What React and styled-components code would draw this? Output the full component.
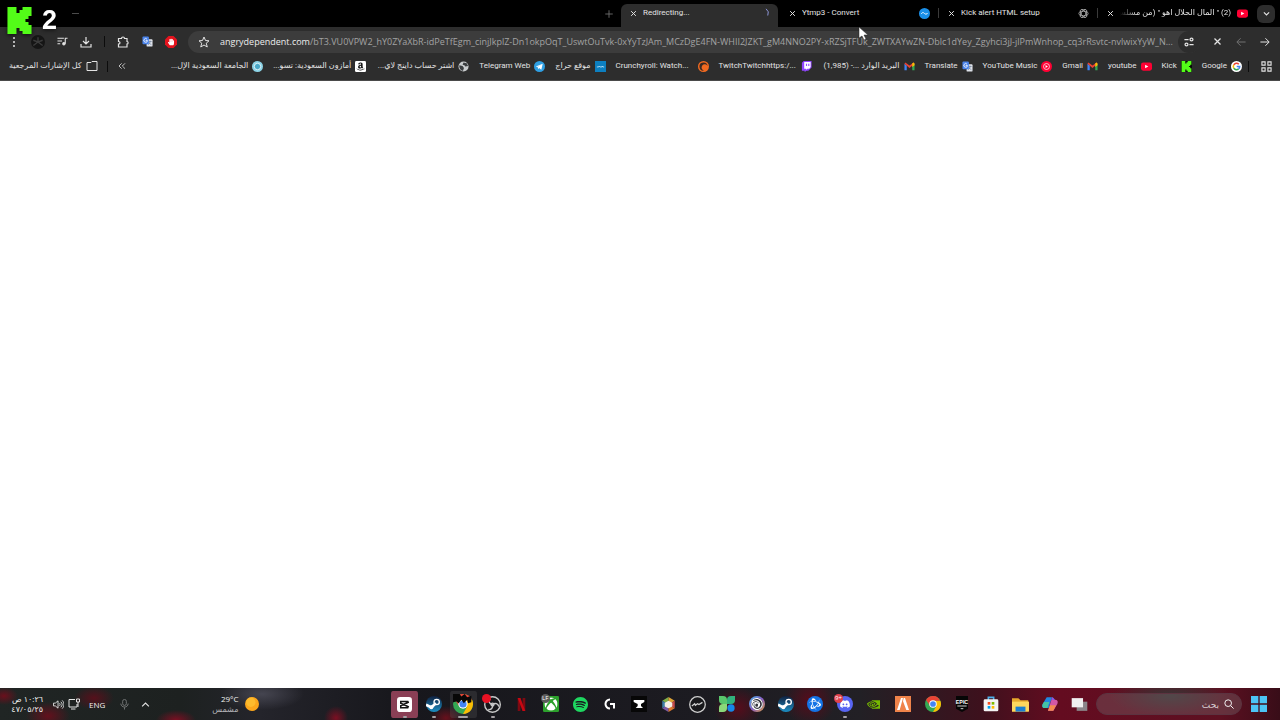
import React from 'react';
import styled, { createGlobalStyle, css } from 'styled-components';
import { SiSpotify, SiNvidia, SiUbisoft, SiBattledotnet } from 'react-icons/si';
import { FaXbox, FaDiscord, FaAmazon, FaHandPaper } from 'react-icons/fa';

const GlobalStyle = createGlobalStyle`
  * { box-sizing: border-box; }
  body {
    margin: 0;
    background: #fff;
    font-family: "Open Sans", "Noto Sans", "DejaVu Sans", sans-serif;
  }
  button, input { font-family: inherit; }
`;

const Browser = styled.div`
  position: relative;
  display: flex;
  flex-direction: column;
  min-height: 100vh;
`;

const IconButton = styled.button`
  flex: none;
  display: flex;
  align-items: center;
  justify-content: center;
  width: ${(p) => p.$size || 24}px;
  height: ${(p) => p.$size || 24}px;
  padding: 0;
  border: none;
  border-radius: 50%;
  background: ${(p) => p.$bg || 'transparent'};
  color: ${(p) => p.$color || '#e3e3e3'};
`;

const TabStrip = styled.header`
  display: flex;
  align-items: flex-end;
  justify-content: flex-end;
  height: 27px;
  padding-right: 5px;
  background: #000;
`;

const NewTab = styled(IconButton)`
  height: 26px;
`;

const Tab = styled.div`
  position: relative;
  display: flex;
  align-items: center;
  gap: 6px;
  width: 159px;
  height: 23px;
  padding: 0 9px 5px 8px;
  color: #e3e3e3;
  font-family: Roboto, "DejaVu Sans", sans-serif;
  font-size: 8px;
  border-radius: 6px 6px 0 0;
  ${(p) => p.$active && css`
    background: #2d2d2d;
    width: 157px;
    margin-right: 2px;
  `}
  ${(p) => p.$divider && css`
    &::after {
      content: '';
      position: absolute;
      right: 0;
      top: 4px;
      height: 10px;
      width: 1px;
      background: #3a3a3a;
    }
  `}
`;

const TabTitle = styled.span`
  flex: 1;
  overflow: hidden;
  white-space: nowrap;
  text-align: start;
  line-height: 16px;
  ${(p) => p.dir === 'rtl' && css`
    mask-image: linear-gradient(to left, #000 85%, transparent);
  `}
`;

const TabSearch = styled(IconButton)`
  border-radius: 6px;
  align-self: center;
`;

const Toolbar = styled.div`
  display: flex;
  align-items: center;
  height: 29px;
  padding: 0 3px 0 2px;
  background: #2d2d2d;
`;

const Divider = styled.span`
  flex: none;
  width: 1px;
  height: 11px;
  margin: 0 ${(p) => p.$gap || 6}px;
  background: #0c0c0c;
`;

const AddressBar = styled.div`
  flex: 1;
  min-width: 0;
  display: flex;
  align-items: center;
  height: 22px;
  margin: 0 5px;
  padding-left: 5px;
  border-radius: 11px;
  background: #3c3c3c;
`;

const Url = styled.span`
  flex: 1;
  min-width: 0;
  margin: 0 3px 0 5px;
  overflow: hidden;
  white-space: nowrap;
  font-size: 9px;
  line-height: 16px;
  color: #a3a3a3;
  b { font-weight: 400; color: #ededed; }
`;

const Bookmarks = styled.nav`
  display: flex;
  align-items: center;
  height: 25px;
  padding: 0 3px 4px 9px;
  background: #2d2d2d;
  border-bottom: 1px solid #4a4a4a;
`;

const BookmarkList = styled.div`
  display: flex;
  gap: 10px;
  margin-left: auto;
`;

const Bookmark = styled.a`
  display: flex;
  align-items: center;
  gap: 4px;
  color: #e3e3e3;
  font-family: Roboto, "DejaVu Sans", sans-serif;
  font-size: 8px;
  line-height: 16px;
  text-decoration: none;
  white-space: nowrap;
  svg { flex: none; }
  span { width: ${(p) => (p.$long ? '78px' : 'auto')}; }
`;

const Page = styled.main`
  flex: 1;
  background: #fff;
`;

const TaskbarRoot = styled.footer`
  display: flex;
  align-items: center;
  height: 32px;
  padding: 0 12px;
  color: #f2f2f2;
  background:
    radial-gradient(ellipse 14px 9px at 4px 8px, #6b0f1c, transparent),
    radial-gradient(ellipse 22px 14px at 48px 28px, #63101c, transparent),
    radial-gradient(ellipse 20px 12px at 94px 10px, #56101b, transparent),
    radial-gradient(ellipse 20px 10px at 176px 32px, #7c0f22, transparent),
    radial-gradient(ellipse 42px 16px at 262px 6px, #454550, transparent),
    radial-gradient(ellipse 12px 12px at 336px 30px, #7c0f22, transparent),
    radial-gradient(ellipse 16px 12px at 446px 30px, #68101c, transparent),
    radial-gradient(ellipse 24px 22px at 738px 20px, #560c1b, transparent),
    radial-gradient(ellipse 26px 26px at 810px 12px, #560c1b, transparent),
    radial-gradient(ellipse 60px 20px at 1170px 8px, #383636, transparent),
    linear-gradient(90deg, #202524 0, #1d2120 180px, #24242b 260px, #17171c 400px, #1c1b21 700px, #222025 860px, #3d111d 980px, #640c20 1060px, #5d1021 1220px, #380d18 100%);
`;

const Tray = styled.div`
  display: flex;
  align-items: center;
  gap: 7px;
  font-size: 8px;
`;

const TrayGroup = styled.div`
  display: flex;
  align-items: center;
`;

const Clock = styled.time`
  width: 31px;
  line-height: 10px;
  text-align: right;
  white-space: nowrap;
`;

const Weather = styled.div`
  display: flex;
  align-items: center;
  gap: 6px;
  margin-left: 58px;
  font-size: 8px;
  line-height: 10px;
  text-align: right;
`;

const WeatherText = styled.div`
  small { display: block; font-size: 8px; color: #b5b5b8; }
`;

const Dock = styled.div`
  display: flex;
  width: 704px;
  margin-left: auto;
`;

const DockApp = styled.button`
  position: relative;
  flex: 1;
  display: flex;
  align-items: center;
  justify-content: center;
  height: 27px;
  padding: 0 1px;
  border: none;
  border-radius: 3px;
  background: ${(p) => p.$bg || 'transparent'};
  background-clip: content-box;
  color: #fff;
  ${(p) => p.$running && css`
    &::after {
      content: '';
      position: absolute;
      bottom: 0;
      width: ${p.$running}px;
      height: 2px;
      border-radius: 1px;
      background: #a5a0a4;
    }
  `}
`;

const Badge = styled.span`
  position: absolute;
  top: 3px;
  left: 4px;
  width: 9px;
  height: 9px;
  border-radius: 50%;
  background: ${(p) => p.$bg};
  font-size: 6px;
  line-height: 9px;
  text-align: center;
`;

const Search = styled.label`
  display: flex;
  align-items: center;
  width: 146px;
  height: 22px;
  margin: 0 8px 0 2px;
  padding: 0 7px;
  gap: 5px;
  border: 1px solid #5c3340;
  border-radius: 11px;
  background: rgba(120, 100, 105, 0.4);
  input {
    flex: 1;
    min-width: 0;
    padding: 0;
    border: none;
    outline: none;
    background: transparent;
    color: #ddd;
    font-size: 9px;
  }
  input::placeholder { color: #d6ccd0; opacity: 1; }
`;

const Overlay = styled.div`
  position: absolute;
  top: 4px;
  left: 6px;
  display: flex;
  align-items: center;
  gap: 9px;
  color: #fff;
  font: bold 27px/32px "Liberation Sans", Arial, sans-serif;
  filter: drop-shadow(0 1px 2px rgba(0, 0, 0, 0.7));
`;

const DragMark = styled.span`
  width: 7px;
  height: 1px;
  margin: 0 auto 13px 72px;
  background: #4b4b4b;
`;

const Pointer = styled.svg`
  position: absolute;
  top: 26px;
  left: 858px;
`;

const Svg = ({ s = 11, vb = 24, children, ...rest }) => (
  <svg width={s} height={s} viewBox={`0 0 ${vb} ${vb}`} fill="none" stroke="currentColor" strokeWidth="2.4" aria-hidden="true" {...rest}>
    {children}
  </svg>
);

const CloseIcon = ({ s = 8 }) => <Svg s={s} strokeWidth="3.4"><path d="M4 4l16 16M20 4L4 20" /></Svg>;
const KickIcon = ({ s = 11, boxed }) => (
  <Svg s={s} stroke="none">
    {boxed && <rect width="24" height="24" fill="#0b0b0b" />}
    <path fill="#53fc18" d="M1.3 0h8v5.3H12V2.7h2.700V0h8v8H20v2.700h-2.700v2.600H20V16h2.700v8h-8v-2.700H12v-2.600H9.300V24h-8z" />
  </Svg>
);
const YoutubeIcon = () => (
  <Svg stroke="none"><rect y="3" width="24" height="18" rx="5" fill="#ff0033" /><path fill="#fff" d="M9 8l7 4-7 4z" /></Svg>
);
const GmailIcon = () => (
  <Svg stroke="none">
    <path fill="#4285f4" d="M1 6v14h5V10z" /><path fill="#34a853" d="M18 10v10h5V6z" />
    <path fill="#ea4335" d="M3 3l9 7 9-7 2 3-11 9L1 6z" /><path fill="#fbbc04" d="M18 5l3-2 2 3v3l-5 4z" />
  </Svg>
);
const TranslateIcon = () => (
  <Svg stroke="none">
    <rect x="10" y="7" width="13" height="16" rx="2" fill="#dfe3ea" />
    <path d="M14 12h7M17.5 10v2c0 4-2 6-4 7m2-5c1 3 3 4 5 5" stroke="#6b7c98" strokeWidth="1.5" />
    <rect x="1" y="1" width="14" height="17" rx="2" fill="#4a83ea" />
    <path d="M11 7a4 4 0 1 0 1 3H8" stroke="#fff" strokeWidth="1.8" />
  </Svg>
);
const GoogleIcon = () => (
  <Svg stroke="none">
    <circle cx="12" cy="12" r="12" fill="#fff" />
    <g fill="none" strokeWidth="3.4">
      <path stroke="#ea4335" d="M6 8.5A7 7 0 0 1 17 7" /><path stroke="#fbbc04" d="M6 8.5a7 7 0 0 0 0 7" />
      <path stroke="#34a853" d="M6 15.5A7 7 0 0 0 16.5 17.3" /><path stroke="#4285f4" d="M12.5 12H19a7 7 0 0 1-2.5 5.3" />
    </g>
  </Svg>
);
const GlobeIcon = () => (
  <Svg stroke="none"><circle cx="12" cy="12" r="11" fill="#c9ccce" /><path fill="#3b3e40" d="M3 9l7 2 3 4-2 6c-5 0-9-6-8-12zM12 3l7 2 3 6-6 1-2-3-4-1z" /></Svg>
);
const ChromeIcon = ({ s = 17 }) => (
  <Svg s={s} stroke="none">
    <circle cx="12" cy="12" r="12" fill="#34a853" />
    <path fill="#fbbc04" d="M12 12V7h10.9A12 12 0 0 1 12 24l4.5-8z" />
    <path fill="#ea4335" d="M12 12l-5 2L1.6 6A12 12 0 0 1 22.8 7H12z" />
    <circle cx="12" cy="12" r="5.6" fill="#fff" /><circle cx="12" cy="12" r="4.3" fill="#4285f4" />
  </Svg>
);
const TelegramIcon = () => (
  <Svg stroke="none"><circle cx="12" cy="12" r="12" fill="#2f9fe3" /><path fill="#fff" d="M4 12l15-6-3 13-5-4-2 3-1-5 8-5-9 5z" /></Svg>
);
const KingIcon = () => (
  <Svg stroke="none"><circle cx="12" cy="12" r="12" fill="#8bd3e6" /><circle cx="12" cy="12" r="7" fill="#4ba9c8" stroke="#e8f7fb" strokeWidth="2" /></Svg>
);
const AmazonIcon = () => (
  <Svg stroke="none"><rect width="24" height="24" rx="3" fill="#fff" /><FaAmazon x="2" y="2" size={20} color="#111" /></Svg>
);
const HarajIcon = () => (
  <Svg stroke="none"><rect width="24" height="24" fill="#0d7fc0" /><path d="M4 13h4l1-2 2 2h4l1-2 1 2h3" stroke="#cfe8f6" strokeWidth="1.8" /></Svg>
);
const CrunchyIcon = () => (
  <Svg stroke="none"><circle cx="12" cy="12" r="12" fill="#f26a21" /><path fill="#3b2a22" d="M21 11a9 9 0 1 0-8 10 7 7 0 1 1 8-10z" /><circle cx="15" cy="13" r="4" fill="#f26a21" /></Svg>
);
const TwitchIcon = () => (
  <Svg stroke="none"><path fill="#9146ff" d="M2 4l4-4h17v14l-7 7h-4l-4 3v-3H2z" /><path fill="#fff" d="M7 2h14v11l-3 4h-4l-3 2v-2H7z" /><path d="M12 6v5M17 6v5" stroke="#9146ff" /></Svg>
);
const MusicIcon = () => (
  <Svg stroke="none"><circle cx="12" cy="12" r="12" fill="#ff0033" /><circle cx="12" cy="12" r="6.5" stroke="#fff" strokeWidth="1.5" /><path fill="#fff" d="M10 8.5l5 3.5-5 3.5z" /></Svg>
);

const tabs = [
  { title: 'Redirecting...', active: true, icon: <Svg s={10} stroke="#8e97d8"><path d="M17 2a13 13 0 0 1 4 16" /></Svg> },
  { title: 'Ytmp3 - Convert', divider: true, icon: <Svg stroke="none"><circle cx="12" cy="12" r="12" fill="#1a8fe8" /><path d="M5 13c3-5 5-3 7-1s5 2 7-1" stroke="#fff" strokeWidth="2" /></Svg> },
  {
    title: 'Kick alert HTML setup', divider: true,
    icon: <Svg stroke="#b5b5b5" strokeWidth="1.8">{[0, 60, 120].map((a) => <ellipse key={a} cx="12" cy="12" rx="10" ry="5" transform={`rotate(${a} 12 12)`} />)}</Svg>,
  },
  { title: '(2) " المال الحلال اهو " (من مسلس', dir: 'rtl', icon: <YoutubeIcon /> },
];

const bookmarks = [
  { label: 'الجامعة السعودية الإل...', rtl: true, long: true, icon: <KingIcon /> },
  { label: 'أمازون السعودية: تسو...', rtl: true, long: true, icon: <AmazonIcon /> },
  { label: 'اشتر حساب داينج لاي...', rtl: true, long: true, icon: <GlobeIcon /> },
  { label: 'Telegram Web', icon: <TelegramIcon /> },
  { label: 'موقع حراج', rtl: true, icon: <HarajIcon /> },
  { label: 'Crunchyroll: Watch...', long: true, icon: <CrunchyIcon /> },
  { label: 'TwitchTwitchhttps:/...', long: true, icon: <TwitchIcon /> },
  { label: 'البريد الوارد ...- (1,985)', rtl: true, long: true, icon: <GmailIcon /> },
  { label: 'Translate', icon: <TranslateIcon /> },
  { label: 'YouTube Music', icon: <MusicIcon /> },
  { label: 'Gmail', icon: <GmailIcon /> },
  { label: 'youtube', icon: <YoutubeIcon /> },
  { label: 'Kick', icon: <KickIcon boxed /> },
  { label: 'Google', icon: <GoogleIcon /> },
];

const SteamIcon = () => (
  <Svg s={16} stroke="none">
    <defs><linearGradient id="steam" x2="0" y2="1"><stop stopColor="#10203f" /><stop offset="1" stopColor="#1c8fc4" /></linearGradient></defs>
    <circle cx="12" cy="12" r="12" fill="url(#steam)" />
    <path d="M0 13l8 4 7-6" stroke="#fff" strokeWidth="4" /><circle cx="16" cy="9" r="4" stroke="#fff" strokeWidth="2" /><circle cx="8" cy="17" r="3" fill="#fff" />
  </Svg>
);

const apps = [
  { name: 'CapCut', bg: '#8a3f55', running: 4, icon: <Svg s={15} stroke="none"><rect width="24" height="24" rx="5" fill="#fff" /><path d="M17 9V7H6v3l13 6M17 15v2H6v-3l13-6" stroke="#111" strokeWidth="2.4" /></Svg> },
  { name: 'Steam', running: 4, icon: <SteamIcon /> },
  { name: 'Chrome', bg: 'rgba(120,120,120,0.2)', running: 10, icon: <Svg s={20}><ChromeIcon s={24} /><path fill="#080808" stroke="none" d="M0 0h8l2 3 4-3 3 4 5-2v8l-4 1-1-4-4 4-3-4-3 4-3-2-4 1z" /></Svg> },
  { name: 'OBS', running: 4, badge: ' ', badgeBg: '#e81123', icon: <Svg s={17} strokeWidth="2" stroke="#c8c8c8"><circle cx="12" cy="12" r="11" fill="#17171a" /><path d="M12 12c-5-1-6-5-3-8M12 12c4-3 8-1 9 3M12 12c1 5-2 8-6 7" /><circle cx="12" cy="12" r="2" /></Svg> },
  { name: 'Netflix', icon: <Svg s={13} stroke="none"><path fill="#7d0a12" d="M5 0h5v24H5zM14 0h5v24h-5z" /><path fill="#c80812" d="M5 0h5l9 24h-5z" /></Svg> },
  { name: 'Xbox', badge: 'LF', badgeBg: '#5b5b5b', icon: <Svg s={16} stroke="none"><rect width="24" height="24" rx="2" fill="#2ca02c" /><FaXbox x="2" y="2" size={20} color="#fff" /></Svg> },
  { name: 'Spotify', icon: <SiSpotify size={15} color="#1ed760" /> },
  { name: 'Logitech G', icon: <Svg s={12} strokeWidth="4"><path d="M12 3a9 9 0 1 0 0 18M12 12h8v9" /></Svg> },
  { name: 'Anvil', icon: <Svg s={16} stroke="none"><rect width="24" height="24" fill="#070707" /><path fill="#fff" d="M4 6h16v3l-5 3v3l3 3H7l3-3v-3L4 9z" /></Svg> },
  { name: 'Hexagon', icon: <Svg s={15} stroke="none"><path fill="#7fae49" d="M12 0L2 6l10 6z" /><path fill="#e0a437" d="M12 0l10 6-10 6z" /><path fill="#3f7fa8" d="M2 6v12l10-6z" /><path fill="#c34a4a" d="M22 6v12l-10-6z" /><path fill="#7e5aa4" d="M2 18l10 6V12z" /><path fill="#d8762f" d="M22 18l-10 6V12z" /><path fill="#f5efe4" d="M12 6l6 3v6l-6 3-6-3V9z" /></Svg> },
  { name: 'ZOWIE', icon: <Svg s={17} strokeWidth="1.8" stroke="#d0d0d0"><circle cx="12" cy="12" r="11" fill="#18181b" /><path d="M4 14l4-3 1 2 3-2 2 1 5-3" /></Svg> },
  { name: 'Clover', icon: <Svg s={16} stroke="none"><path fill="#59c66c" d="M0 0h6a6 6 0 0 1 6 6v6H6a6 6 0 0 1-6-6z" /><path fill="#31b17c" d="M24 0v6a6 6 0 0 1-6 6h-6V6a6 6 0 0 1 6-6z" /><path fill="#8bd879" d="M0 24v-6a6 6 0 0 1 6-6h6v6a6 6 0 0 1-6 6z" /><circle cx="18" cy="18" r="5.5" fill="#1687e8" /></Svg> },
  { name: 'Ubisoft', icon: <Svg s={16} stroke="none"><defs><linearGradient id="ubi" x2="1" y2="1"><stop stopColor="#3db7e8" /><stop offset=".5" stopColor="#8b5fc7" /><stop offset="1" stopColor="#e0a33c" /></linearGradient></defs><circle cx="12" cy="12" r="12" fill="url(#ubi)" /><circle cx="12" cy="12" r="9" fill="#33343c" /><SiUbisoft x="3" y="3" size={18} color="#fff" /></Svg> },
  { name: 'Steam', icon: <SteamIcon /> },
  { name: 'Battle.net', icon: <Svg s={16} stroke="none"><circle cx="12" cy="12" r="12" fill="#1473e6" /><SiBattledotnet x="3" y="3" size={18} color="#fff" /></Svg> },
  { name: 'Discord', running: 4, badge: '9+', badgeBg: '#e0414c', icon: <Svg s={16} stroke="none"><circle cx="12" cy="12" r="12" fill="#5865f2" /><FaDiscord x="4" y="4" size={16} color="#fff" /></Svg> },
  { name: 'NVIDIA', icon: <SiNvidia size={13} color="#76b900" /> },
  { name: 'FiveM', icon: <Svg s={16} stroke="none"><rect width="24" height="24" fill="#f0834a" /><path fill="#fff" d="M9 3h3l-5 18H3zM13 3h2l6 18h-4l-5-13z" /></Svg> },
  { name: 'Chrome', icon: <ChromeIcon s={16} /> },
  { name: 'Epic Games', icon: <Svg s={16} stroke="none"><path fill="#060606" d="M3 0h18v19l-9 5-9-5z" /><text x="12" y="12" textAnchor="middle" fill="#fff" fontFamily="Liberation Sans, sans-serif" fontWeight="700" fontSize="8">EPIC</text><path d="M5 15h14M10 19h4" stroke="#ccc" strokeWidth="1.5" /></Svg> },
  { name: 'Microsoft Store', icon: <Svg s={16} stroke="none"><path d="M8 6V2h8v4" stroke="#4eb0ea" /><rect x="1" y="5" width="22" height="18" rx="2" fill="#f4f4f4" /><path fill="#f25022" d="M7 9h4v4H7z" /><path fill="#7fba00" d="M13 9h4v4h-4z" /><path fill="#00a4ef" d="M7 15h4v4H7z" /><path fill="#ffb900" d="M13 15h4v4h-4z" /></Svg> },
  { name: 'Files', icon: <Svg s={17} stroke="none"><path fill="#e8a92d" d="M0 3h9l3 3h11v16H0z" /><path fill="#ffd75e" d="M0 8h24v14H0z" /><path fill="#1c7fd0" d="M5 15h14v7H5z" /></Svg> },
  { name: 'Copilot', icon: <Svg s={16} stroke="none"><path fill="#2088e0" d="M7 2h8l-5 16H4c-4 0-4-3-3-6z" /><path fill="#45c2a4" d="M3 9h8l-3 9H4c-4 0-4-3-3-6z" /><path fill="#d357a8" d="M17 22H9l5-16h6c4 0 4 3 3 6z" /><path fill="#f58b50" d="M17 22H9l3-8h9z" /><path fill="#8a5be0" d="M15 2c3 0 3 4 6 4h-7l-2 5z" /></Svg> },
  { name: 'Task view', icon: <Svg s={17} stroke="none"><path fill="#8b8589" d="M8 8h15v13H8z" /><path fill="#f0f0f0" d="M1 3h16v13H1z" /></Svg> },
];

function TabBar() {
  return (
    <TabStrip>
      <DragMark />
      <NewTab $color="#777" aria-label="New tab"><Svg s={10} strokeWidth="2"><path d="M12 3v18M3 12h18" /></Svg></NewTab>
      {tabs.map((t) => (
        <Tab key={t.title} $active={t.active} $divider={t.divider}>
          <IconButton $size={8} aria-label="Close tab"><CloseIcon s={7} /></IconButton>
          <TabTitle dir={t.dir}>{t.title}</TabTitle>
          {t.icon}
        </Tab>
      ))}
      <TabSearch $size={18} $bg="#2d2d2d" aria-label="Search tabs"><Svg s={9} strokeWidth="3"><path d="M5 9l7 7 7-7" /></Svg></TabSearch>
    </TabStrip>
  );
}

function NavBar() {
  return (
    <Toolbar>
      <IconButton aria-label="Menu"><Svg s={12} fill="currentColor" stroke="none"><circle cx="12" cy="4" r="2" /><circle cx="12" cy="12" r="2" /><circle cx="12" cy="20" r="2" /></Svg></IconButton>
      <IconButton aria-label="Profile"><Svg s={14} stroke="none"><circle cx="12" cy="12" r="12" fill="#151515" /><path d="M12 4v8l-8 6m8-6l8 6M4 9l8 3 8-3" stroke="#3b3b3b" /></Svg></IconButton>
      <IconButton aria-label="Media"><Svg><path d="M1 5h14M1 11h10M1 17h6M23 5h-5v12" /><circle cx="15" cy="17" r="2.5" fill="currentColor" /></Svg></IconButton>
      <IconButton aria-label="Downloads"><Svg s={12}><path d="M12 2v13M6 10l6 6 6-6M2 16v6h20v-6" /></Svg></IconButton>
      <Divider />
      <IconButton aria-label="Extensions"><Svg s={12}><path d="M3 5h6c0-4 6-4 6 0h5v6c3 0 3 5 0 5v6H3v-6c4 0 4-5 0-5z" /></Svg></IconButton>
      <IconButton aria-label="Translate"><TranslateIcon /></IconButton>
      <IconButton aria-label="Ad blocker"><Svg s={12} stroke="none"><path fill="#e3141e" d="M7 0h10l7 7v10l-7 7H7l-7-7V7z" /><FaHandPaper x="5" y="5" size={14} color="#fff" /></Svg></IconButton>
      <AddressBar>
        <IconButton $size={22} aria-label="Bookmark this page"><Svg s={12} strokeWidth="2"><path d="M12 2l3 7 7 .6-5.5 4.8L18.5 22 12 18l-6.5 4 2-7.6L2 9.6 9 9z" /></Svg></IconButton>
        <Url><b>angrydependent.com</b>/bT3.VU0VPW2_hY0ZYaXbR-idPeTfEgm_cinjJkplZ-Dn1okpOqT_UswtOuTvk-0xYyTzJAm_MCzDgE4FN-WHII2JZKT_gM4NNO2PY-xRZSjTFUk_ZWTXAYwZN-Dblc1dYey_Zgyhci3jJ-jlPmWnhop_cq3rRsvtc-nvlwixYyW_N...</Url>
        <IconButton $size={22} $bg="#2d2d2d" aria-label="Site information"><Svg s={10} strokeWidth="3"><path d="M1 6h10M13 18h10" /><circle cx="18" cy="6" r="3.5" /><circle cx="6" cy="18" r="3.5" /></Svg></IconButton>
      </AddressBar>
      <IconButton aria-label="Stop"><CloseIcon s={9} /></IconButton>
      <IconButton $color="#727272" aria-label="Forward"><Svg s={10}><path d="M23 12H3M11 3l-9 9 9 9" /></Svg></IconButton>
      <IconButton aria-label="Back"><Svg s={10}><path d="M1 12h20M13 3l9 9-9 9" /></Svg></IconButton>
    </Toolbar>
  );
}

function BookmarkBar() {
  return (
    <Bookmarks>
      <Bookmark href="#all">
        <span dir="rtl">كل الإشارات المرجعية</span>
        <Svg s={12} strokeWidth="2"><path d="M2 5h8l2-2h10v18H2z" /></Svg>
      </Bookmark>
      <Divider $gap={9} />
      <IconButton $size={10} aria-label="More bookmarks"><Svg s={8}><path d="M11 4l-8 8 8 8M21 4l-8 8 8 8" /></Svg></IconButton>
      <BookmarkList>
        {bookmarks.map((b) => (
          <Bookmark key={b.label} href="#bookmark" $long={b.long}>
            <span dir={b.rtl ? 'rtl' : 'ltr'}>{b.label}</span>
            {b.icon}
          </Bookmark>
        ))}
      </BookmarkList>
      <Divider />
      <IconButton $size={22} aria-label="Tab groups"><Svg s={11}><path d="M2 2h7v7H2zM15 2h7v7h-7zM2 15h7v7H2zM15 15h7v7h-7z" /></Svg></IconButton>
    </Bookmarks>
  );
}

function Taskbar() {
  return (
    <TaskbarRoot>
      <Tray>
        <Clock dir="rtl">١٠:٢٦ ص<br />٤٧/٠٥/٢٥</Clock>
        <TrayGroup>
          <IconButton $size={16} aria-label="Volume"><Svg s={11} strokeWidth="2"><path d="M1 9v6h4l6 5V4L5 9zM14 9c2 2 2 4 0 6M17 6c4 4 4 8 0 12M20 3c5 5 5 13 0 18" /></Svg></IconButton>
          <IconButton $size={16} aria-label="Network"><Svg s={12} strokeWidth="2"><path d="M14 3H2v15h16v-6M6 22h9M17 2h6v6h-6zM20 8v10" /></Svg></IconButton>
        </TrayGroup>
        <span>ENG</span>
        <TrayGroup>
          <IconButton aria-label="Microphone" $color="#77797a"><Svg s={11} strokeWidth="2"><rect x="8" y="1" width="8" height="13" rx="4" /><path d="M4 10c0 10 16 10 16 0M12 18v5" /></Svg></IconButton>
          <IconButton aria-label="Hidden icons" $size={18}><Svg s={9} strokeWidth="3"><path d="M3 17l9-9 9 9" /></Svg></IconButton>
        </TrayGroup>
      </Tray>
      <Weather>
        <WeatherText>29°C<small dir="rtl">مشمس</small></WeatherText>
        <Svg s={14} stroke="none"><circle cx="12" cy="12" r="12" fill="#fba61c" /><circle cx="10" cy="9" r="8" fill="#fdbb2d" /></Svg>
      </Weather>
      <Dock>
        {apps.map((a, i) => (
          <DockApp key={i} aria-label={a.name} $bg={a.bg} $running={a.running}>
            {a.icon}
            {a.badge && <Badge $bg={a.badgeBg}>{a.badge}</Badge>}
          </DockApp>
        ))}
      </Dock>
      <Search>
        <input type="text" dir="rtl" placeholder="بحث" aria-label="بحث" />
        <Svg s={10}><circle cx="10" cy="10" r="8" /><path d="M16 16l7 7" /></Svg>
      </Search>
      <IconButton $size={18} aria-label="Start"><Svg s={16} stroke="none"><path fill="#4cc4f5" d="M0 0h11v11H0zM13 0h11v11H13zM0 13h11v11H0zM13 13h11v11H13z" /></Svg></IconButton>
    </TaskbarRoot>
  );
}

export default function App() {
  return (
    <Browser>
      <GlobalStyle />
      <TabBar />
      <NavBar />
      <BookmarkBar />
      <Page />
      <Taskbar />
      <Overlay><KickIcon s={27} />2</Overlay>
      <Pointer width="12" height="16" viewBox="0 0 12 16"><path fill="#fff" stroke="#222" strokeWidth=".5" d="M1 1v11l3-2 2 4 2-1-2-4h4z" /></Pointer>
    </Browser>
  );
}
